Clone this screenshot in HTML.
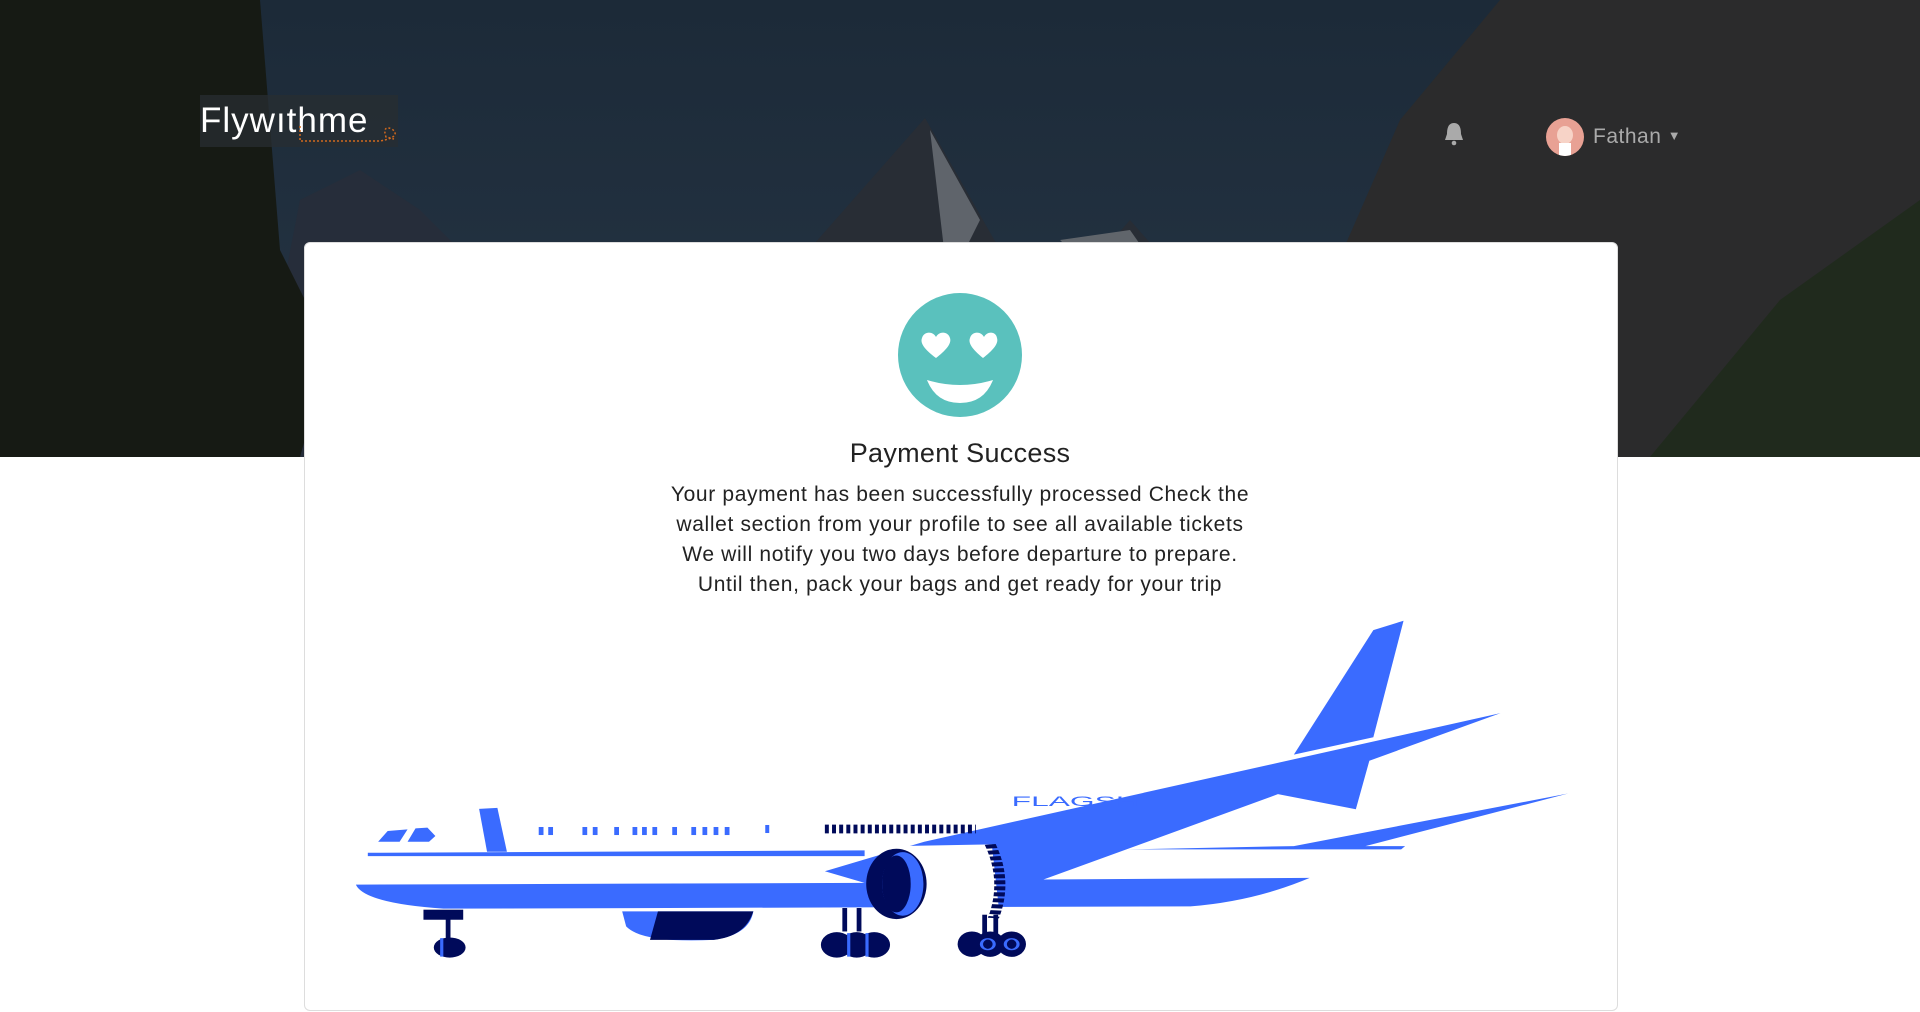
<!DOCTYPE html>
<html><head><meta charset="utf-8"><style>
html,body{margin:0;padding:0;width:1920px;height:1012px;overflow:hidden;background:#fff;font-family:"Liberation Sans",sans-serif}
.hero{position:absolute;left:0;top:0;width:1920px;height:457px;overflow:hidden}
.logo{position:absolute;left:200px;top:95px;width:198px;height:52px;background:rgba(40,45,50,.75)}
.logo span{position:absolute;left:0;top:6px;color:#fff;font-size:35px;letter-spacing:1px}
.card{position:absolute;left:304px;top:242px;width:1312px;height:767px;background:#fff;border:1px solid #ddd;border-radius:6px}
.title{position:absolute;left:0;width:1920px;top:438px;text-align:center;font-size:27px;color:#222;letter-spacing:0.3px}
.body{position:absolute;left:0;width:1920px;top:480px;text-align:center;font-size:21px;line-height:30px;color:#222;letter-spacing:0.65px}
.user{position:absolute;left:1593px;top:125px;color:#aaa;font-size:21px;letter-spacing:0.5px}
</style></head><body>
<div class="hero">
<svg width="1920" height="457" viewBox="0 0 1920 457">
<defs><linearGradient id="sky" x1="0" y1="0" x2="0" y2="1"><stop offset="0" stop-color="#1c2a38"/><stop offset="1" stop-color="#263545"/></linearGradient></defs>
<rect width="1920" height="457" fill="url(#sky)"/>
<path d="M840 250 Q860 215 900 225 Q950 230 1000 260 L960 290 Z" fill="#4a4f55"/>
<path d="M1050 250 Q1100 250 1140 300 L1120 340 L1020 290Z" fill="#55595e"/>
<path d="M250 457 L300 200 L360 170 L420 210 L470 260 L540 250 L600 300 L620 457Z" fill="#262d3a"/>
<path d="M650 457 L700 330 L800 260 L925 118 L1000 250 L1060 300 L1130 220 L1200 300 L1240 457Z" fill="#282d35"/>
<path d="M930 130 L980 220 L960 260 L1000 330 L950 300Z" fill="#5f646b"/>
<path d="M1060 240 L1130 230 L1200 330 L1150 330Z" fill="#60656b"/>
<path d="M1300 457 L1330 280 L1400 120 L1500 0 L1920 0 L1920 457Z" fill="#2b2b2c"/>
<path d="M1650 457 L1780 300 L1920 200 L1920 457Z" fill="#202a1d"/>
<path d="M0 0 L260 0 L280 250 L330 350 L300 457 L0 457Z" fill="#161a14"/>
</svg>
</div>
<div class="logo"><span>Flyw<span style="position:static">ı</span>thme</span>
<svg style="position:absolute;left:90px;top:28px" width="110" height="22"><path d="M10 3 L10 18 L90 18 Q112 14 102 6 Q92 2 96 14 L104 16" fill="none" stroke="#d2691e" stroke-width="1.5" stroke-dasharray="2 2"/></svg></div>
<svg style="position:absolute;left:1443px;top:122px" width="22" height="24" viewBox="0 0 22 24"><path d="M11 1 C5 1 4 7 4 12 L2 18 L20 18 L18 12 C18 7 17 1 11 1Z" fill="#aaa"/><circle cx="11" cy="21" r="2.3" fill="#aaa"/></svg>
<div style="position:absolute;left:1546px;top:118px;width:38px;height:38px;border-radius:50%;background:#e8a194;overflow:hidden"><div style="position:absolute;left:11px;top:8px;width:16px;height:18px;border-radius:50%;background:#f7d3c7"></div><div style="position:absolute;left:13px;top:25px;width:12px;height:13px;background:#fff"></div></div>
<div class="user">Fathan <span style="font-size:13px;vertical-align:3px">▼</span></div>
<div class="card"></div>
<svg style="position:absolute;left:898px;top:293px" width="124" height="124" viewBox="0 0 124 124">
<circle cx="62" cy="62" r="62" fill="#5ac1bd"/>
<path d="M38 65 C26 56 22 50 24 45 C26 38 35 38 38 44 C41 38 50 38 52 45 C54 51 47 58 38 65Z" fill="#fff"/>
<path d="M85 65 C74 56 70 50 72 45 C74 38 83 38 86 44 C89 38 98 38 99 45 C101 51 94 58 85 65Z" fill="#fff"/>
<path d="M29 87 Q62 97 95 87 Q86 110 62 110 Q38 110 29 87Z" fill="#fff"/>
</svg>
<div class="title">Payment Success</div>
<div class="body">Your payment has been successfully processed Check the<br>wallet section from your profile to see all available tickets<br>We will notify you two days before departure to prepare.<br>Until then, pack your bags and get ready for your trip</div>
<svg style="position:absolute;left:340px;top:600px" width="1240" height="380" viewBox="0 0 1560 1135" preserveAspectRatio="none">
<g fill="#3a6bff">
<path d="M1200 462 L1300 90 L1338 62 L1300 410Z"/>
<path d="M735 722 L1460 338 L1295 480 L1278 625 L1180 580 L885 835 L1220 830 Q1150 900 1070 915 L130 922 Q30 905 20 850 L660 845 L610 810 Z"/>
<path d="M990 745 L1200 735 L1545 578 L1290 735 L1340 735 L1335 745Z"/>
<path d="M35 755 L660 748 L660 765 L35 765Z"/>
<path d="M175 624 L198 621 L210 752 L185 752Z"/>
<path d="M48 722 L60 690 L85 685 L75 722Z M85 722 L95 682 L110 680 L120 705 L112 722Z"/>
<path d="M355 930 L520 930 Q515 1000 470 1015 Q380 1025 360 975Z"/>
</g>
<path d="M400 930 L520 930 Q510 1005 470 1015 L390 1015Z" fill="#000a5a"/>
<g fill="#3a6bff">
<rect x="250" y="678" width="6" height="24"/><rect x="262" y="678" width="6" height="24"/>
<rect x="305" y="678" width="6" height="24"/><rect x="318" y="678" width="6" height="24"/>
<rect x="345" y="678" width="6" height="24"/><rect x="368" y="678" width="6" height="24"/><rect x="380" y="678" width="6" height="24"/><rect x="393" y="678" width="6" height="24"/>
<rect x="418" y="678" width="6" height="24"/><rect x="442" y="678" width="6" height="24"/><rect x="456" y="678" width="6" height="24"/><rect x="470" y="678" width="6" height="24"/><rect x="484" y="678" width="6" height="24"/><rect x="535" y="672" width="5" height="24"/>
</g>
<path d="M610 684 L800 684" stroke="#000a5a" stroke-width="26" stroke-dasharray="5 4"/>
<text x="845" y="615" font-family="Liberation Sans" font-size="40" fill="#3a6bff">FLAGSH</text>
<path d="M700 735 L820 730 L830 945 L720 960Z" fill="#fff"/>
<path d="M818 730 Q840 840 822 950" fill="none" stroke="#000a5a" stroke-width="14" stroke-dasharray="12 6"/>
<ellipse cx="700" cy="848" rx="38" ry="105" fill="#000a5a"/>
<ellipse cx="708" cy="848" rx="26" ry="95" fill="#3a6bff"/>
<ellipse cx="700" cy="848" rx="18" ry="85" fill="#000a5a"/>
<g fill="#000a5a">
<rect x="105" y="925" width="50" height="30"/><rect x="133" y="950" width="6" height="60"/>
<ellipse cx="138" cy="1038" rx="20" ry="30"/>
<rect x="632" y="920" width="6" height="70"/><rect x="650" y="920" width="6" height="70"/>
<ellipse cx="625" cy="1030" rx="20" ry="38"/><ellipse cx="650" cy="1030" rx="20" ry="38"/><ellipse cx="672" cy="1030" rx="20" ry="38"/>
<rect x="808" y="940" width="6" height="60"/><rect x="822" y="940" width="6" height="60"/>
<ellipse cx="795" cy="1028" rx="18" ry="38"/><ellipse cx="818" cy="1028" rx="18" ry="38"/><ellipse cx="845" cy="1028" rx="18" ry="38"/>
</g>
<g fill="none" stroke="#3a6bff" stroke-width="4"><ellipse cx="815" cy="1028" rx="8" ry="16"/><ellipse cx="845" cy="1028" rx="8" ry="16"/><path d="M640 995 L640 1065 M663 995 L663 1065 M128 1010 L128 1065"/></g>
</svg>
</body></html>
